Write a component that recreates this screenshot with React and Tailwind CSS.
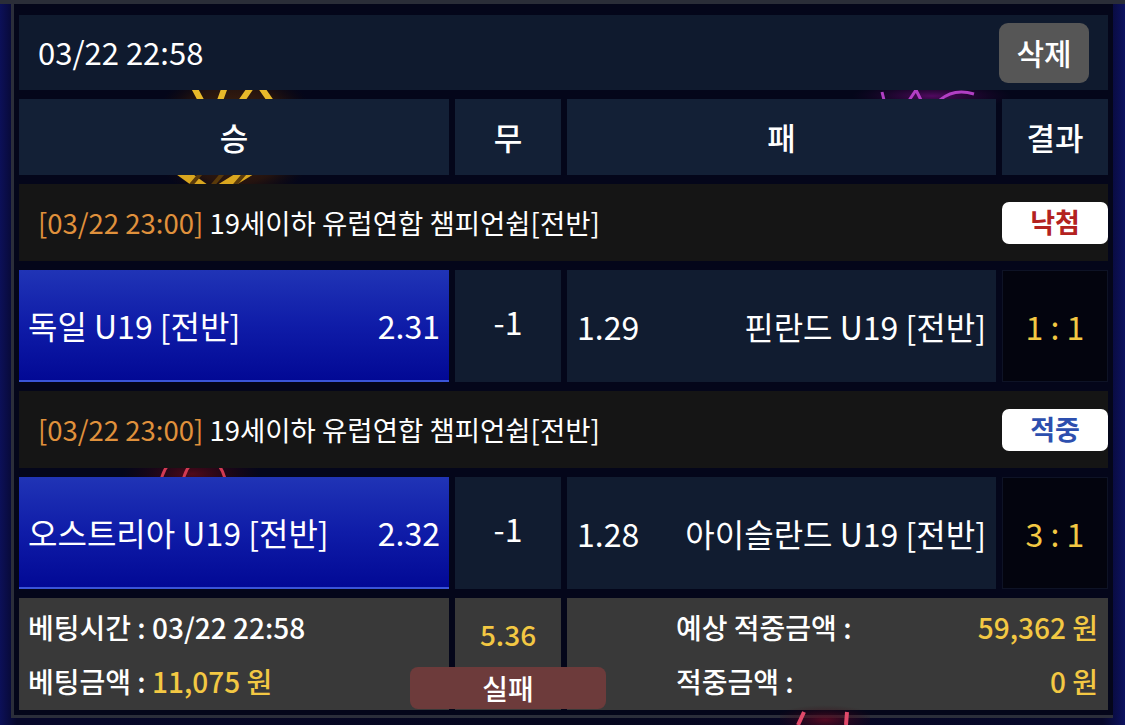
import React from "react";

// 배팅 내역 카드 - 한 장짜리 화면
const matches = [
  {
    time: "[03/22 23:00]",
    league: "19세이하 유럽연합 챔피언쉽[전반]",
    status: "낙첨",
    home: "독일 U19 [전반]",
    homeOdds: "2.31",
    draw: "-1",
    awayOdds: "1.29",
    away: "핀란드 U19 [전반]",
    score: "1 : 1",
  },
  {
    time: "[03/22 23:00]",
    league: "19세이하 유럽연합 챔피언쉽[전반]",
    status: "적중",
    home: "오스트리아 U19 [전반]",
    homeOdds: "2.32",
    draw: "-1",
    awayOdds: "1.28",
    away: "아이슬란드 U19 [전반]",
    score: "3 : 1",
  },
];

const cols = "grid grid-cols-[430px_106px_429px_106px] gap-x-[6px]";

// 배경 네온 장식 (행 사이 틈으로만 보임)
function Decor() {
  return (
    <>
      <svg className="absolute left-[136px] top-[56px]" width="170" height="140" viewBox="0 0 170 140">
        <defs>
          <radialGradient id="gold" cx="50%" cy="50%" r="50%">
            <stop offset="0%" stopColor="#6b3a0c" stopOpacity="0.9" />
            <stop offset="70%" stopColor="#3a1c08" stopOpacity="0.6" />
            <stop offset="100%" stopColor="#1a0c06" stopOpacity="0" />
          </radialGradient>
        </defs>
        <ellipse cx="85" cy="75" rx="85" ry="70" fill="url(#gold)" />
        <path d="M40 20 L54 46 M68 46 L76 24 M88 46 L106 20 L124 46" stroke="#e8b92a" strokeWidth="6" fill="none" />
        <path d="M26 108 L62 134 L104 108" stroke="#d9a61f" strokeWidth="10" fill="none" />
        <path d="M40 126 L52 112 M62 126 L74 112 M84 126 L96 112" stroke="#5a3a0a" strokeWidth="4" fill="none" />
      </svg>
      <svg className="absolute left-[836px] top-[66px]" width="160" height="45" viewBox="0 0 160 45">
        <defs>
          <radialGradient id="purp" cx="50%" cy="50%" r="50%">
            <stop offset="0%" stopColor="#5a0a68" stopOpacity="0.9" />
            <stop offset="100%" stopColor="#2a0530" stopOpacity="0" />
          </radialGradient>
        </defs>
        <ellipse cx="82" cy="26" rx="80" ry="14" fill="url(#purp)" />
        <path d="M32 22 L34 30 M58 32 L66 20 L72 32 M90 30 Q104 18 124 24" stroke="#b23fc4" strokeWidth="3" fill="none" />
      </svg>
      <svg className="absolute left-[106px] top-[436px]" width="140" height="60" viewBox="0 0 140 60">
        <defs>
          <radialGradient id="redg" cx="50%" cy="50%" r="50%">
            <stop offset="0%" stopColor="#5a0a1a" stopOpacity="0.9" />
            <stop offset="100%" stopColor="#2a0510" stopOpacity="0" />
          </radialGradient>
        </defs>
        <ellipse cx="72" cy="34" rx="70" ry="24" fill="url(#redg)" />
        <path d="M40 44 Q44 26 52 22 M62 44 Q66 26 74 22 M96 22 Q104 30 106 44" stroke="#d23a52" strokeWidth="3" fill="none" />
      </svg>
    </>
  );
}

function MatchHeader({ m }) {
  const win = m.status === "적중";
  return (
    <div className="flex h-[77px] items-center justify-between bg-[#151515] pl-[19px]">
      <div className="text-[27.5px] text-white">
        <span className="text-[#e0913c]">{m.time}</span> {m.league}
      </div>
      <div
        className={
          "flex h-[42px] w-[106px] items-center justify-center rounded-[7px] bg-white text-[27px] font-bold " +
          (win ? "text-[#2d4fae]" : "text-[#b3221f]")
        }
      >
        {m.status}
      </div>
    </div>
  );
}

function MatchRow({ m }) {
  return (
    <div className={cols + " h-[112px] text-[32px] text-white"}>
      <div className="flex items-center justify-between border-b-2 border-[#3a55d8] bg-[linear-gradient(180deg,#2034b6_0%,#0f1ca8_50%,#020995_100%)] px-[9px]">
        <span>{m.home}</span>
        <span>{m.homeOdds}</span>
      </div>
      <div className="flex items-center justify-center bg-[#111c30] pb-[10px]">{m.draw}</div>
      <div className="flex items-center justify-between bg-[#111c30] px-[10px]">
        <span>{m.awayOdds}</span>
        <span>{m.away}</span>
      </div>
      <div className="flex items-center justify-center border border-[#0e1326] bg-[#03040e] text-[#f3c843]">
        {m.score}
      </div>
    </div>
  );
}

export default function App() {
  return (
    <div className="relative h-[725px] w-[1125px] overflow-hidden bg-[linear-gradient(90deg,#0c1058_0%,#06072a_1.5%,#05061d_50%,#06072a_98%,#0d1260_100%)] font-['Noto_Sans_CJK_KR','Noto_Sans',sans-serif]">
      <div className="h-[4px] bg-[#2a2d38]" />

      <div className="relative ml-[11px] w-[1102px] border-b-[3px] border-l-[3px] border-[#2b2e3a] bg-[#04061a] px-[5px] pb-[5px] pt-[11px]">
        <Decor />

        <div className="relative flex flex-col gap-[9px]">
          {/* 상단 시간 + 삭제 */}
          <div className="flex h-[75px] items-center justify-between bg-[#0f1a2e] pl-[19px] pr-[19px]">
            <span className="text-[31px] text-white">03/22 22:58</span>
            <button className="h-[60px] w-[90px] rounded-[9px] bg-[#565656] text-[30px] font-medium text-white">
              삭제
            </button>
          </div>

          {/* 컬럼 헤더 */}
          <div className={cols + " h-[76px] text-[31px] font-medium text-white"}>
            <div className="flex items-center justify-center bg-[#132036]">승</div>
            <div className="flex items-center justify-center bg-[#132036]">무</div>
            <div className="flex items-center justify-center bg-[#132036]">패</div>
            <div className="flex items-center justify-center bg-[#132036]">결과</div>
          </div>

          {matches.map((m, i) => (
            <React.Fragment key={i}>
              <MatchHeader m={m} />
              <MatchRow m={m} />
            </React.Fragment>
          ))}

          {/* 하단 요약 */}
          <div className={cols + " h-[112px] text-[28px] font-medium text-white"}>
            <div className="flex flex-col justify-center bg-[#393939] pl-[9px]">
              <div className="flex h-[54px] items-center">베팅시간 : 03/22 22:58</div>
              <div className="flex h-[54px] items-center">
                베팅금액 :&nbsp;<span className="text-[#f3c843]">11,075 원</span>
              </div>
            </div>
            <div className="relative bg-[#393939] pt-[9px]">
              <div className="flex h-[54px] items-center justify-center text-[#f3c843]">5.36</div>
              <div className="absolute bottom-[1px] left-1/2 z-10 flex h-[42px] w-[196px] -translate-x-1/2 items-center justify-center rounded-[8px] bg-[#6d3b3b] text-white">
                실패
              </div>
            </div>
            <div className="col-span-2 flex flex-col justify-center bg-[#393939] pl-[109px] pr-[10px]">
              <div className="flex h-[54px] items-center justify-between">
                <span>예상 적중금액 :</span>
                <span className="text-[#f3c843]">59,362 원</span>
              </div>
              <div className="flex h-[54px] items-center justify-between">
                <span>적중금액 :</span>
                <span className="text-[#f3c843]">0 원</span>
              </div>
            </div>
          </div>
        </div>
      </div>

      <svg className="absolute left-[780px] top-[700px]" width="90" height="25" viewBox="0 0 90 25">
        <defs>
          <radialGradient id="redb" cx="50%" cy="80%" r="60%">
            <stop offset="0%" stopColor="#6a0a22" stopOpacity="0.8" />
            <stop offset="100%" stopColor="#2a0510" stopOpacity="0" />
          </radialGradient>
        </defs>
        <rect x="0" y="0" width="90" height="25" fill="url(#redb)" />
        <path d="M18 25 L24 12 M66 25 L67 12" stroke="#e04a6a" strokeWidth="4" fill="none" />
      </svg>
    </div>
  );
}
